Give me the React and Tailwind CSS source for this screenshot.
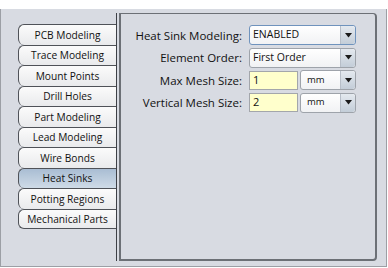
import React from "react";

const tabs = [
  "PCB Modeling",
  "Trace Modeling",
  "Mount Points",
  "Drill Holes",
  "Part Modeling",
  "Lead Modeling",
  "Wire Bonds",
  "Heat Sinks",
  "Potting Regions",
  "Mechanical Parts",
];

function Arrow() {
  return (
    <div className="w-[15px] h-full flex items-center justify-center border-l border-[#b7bec8] bg-gradient-to-b from-[#e4e9ef] to-[#c3cdd8] rounded-r-[3px]">
      <svg width="7" height="5" viewBox="0 0 7 5">
        <path d="M0 0 H7 L3.5 4.5 Z" fill="#1b1b1b" />
      </svg>
    </div>
  );
}

function Select({ value, width, focused, small }) {
  return (
    <div
      className={`h-[20px] ${width} flex items-stretch rounded-[3px] border bg-gradient-to-b from-white to-[#f1f2f4] ${
        focused ? "border-[#6f93bd]" : "border-[#9ea3aa]"
      }`}
    >
      <div
        className={`flex-1 flex items-center font-medium ${
          small ? "text-[9.5px] pl-[6px]" : "text-[10.5px] pl-[3px]"
        }`}
      >
        {value}
      </div>
      <Arrow />
    </div>
  );
}

function Input({ value }) {
  return (
    <div className="h-[19px] w-[49px] border border-[#a3a6ab] bg-[#ffffcc] flex items-center pl-[3px] text-[11px] font-medium">
      {value}
    </div>
  );
}

function Row({ label, children }) {
  return (
    <div className="flex items-center h-[20px]">
      <div className="w-[122px] text-right text-[11.5px] pr-[1px] pt-px">{label}</div>
      <div className="ml-[6px] flex items-center gap-[2px]">{children}</div>
    </div>
  );
}

export default function App() {
  return (
    <div
      className="w-[388px] h-[268px] bg-white pt-[9px] text-[#111]"
      style={{ fontFamily: '"Open Sans", "Noto Sans", sans-serif' }}
    >
      <div className="w-[387px] h-[258px] bg-[#d8dbe2] border-l border-r border-b border-[#9c9fa5] flex pl-[17px] pt-[4px] pb-[5px] pr-[9px]">
        {/* tab strip */}
        <div className="w-[99px] pt-[11px] flex flex-col border-r border-[#3d4046]">
          {tabs.map((t, i) => {
            const active = t === "Heat Sinks";
            return (
              <div
                key={t}
                className={`h-[20.5px] flex items-center justify-center text-[10.2px] font-medium leading-none border-l border-t border-[#4f5258] rounded-l-[6px] ${
                  i === tabs.length - 1 ? "border-b" : ""
                } ${
                  active
                    ? "bg-gradient-to-b from-[#a9bdd3] to-[#cfdbe7]"
                    : "bg-gradient-to-b from-[#fbfbfb] to-[#e9eaec]"
                }`}
              >
                {t}
              </div>
            );
          })}
        </div>

        {/* content panel */}
        <div className="flex-1 ml-[2px] border-l-2 border-t border-r-2 border-b-2 border-[#6c7076] rounded-r-[4px] pt-[11px]">
          <div className="flex flex-col gap-[2.5px]">
            <Row label="Heat Sink Modeling:">
              <Select value="ENABLED" width="w-[107px]" focused />
            </Row>
            <Row label="Element Order:">
              <Select value="First Order" width="w-[107px]" />
            </Row>
            <Row label="Max Mesh Size:">
              <Input value="1" />
              <Select value="mm" width="w-[56px]" small />
            </Row>
            <Row label="Vertical Mesh Size:">
              <Input value="2" />
              <Select value="mm" width="w-[56px]" small />
            </Row>
          </div>
        </div>
      </div>
    </div>
  );
}
